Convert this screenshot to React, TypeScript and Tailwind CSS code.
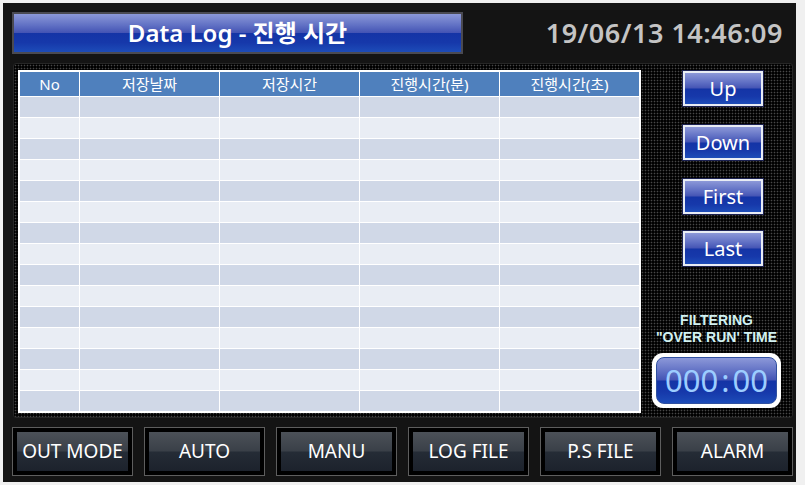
import React from "react";

const columns = [
  { label: "No", w: "w-[59px]" },
  { label: "저장날짜", w: "w-[139px]" },
  { label: "저장시간", w: "w-[139px]" },
  { label: "진행시간(분)", w: "w-[139px]" },
  { label: "진행시간(초)", w: "flex-1" },
];

const rows = Array.from({ length: 15 }, (_, i) => i);

const navButtons = [
  { label: "Up", mt: "mt-0" },
  { label: "Down", mt: "mt-[17px]" },
  { label: "First", mt: "mt-[17px]" },
  { label: "Last", mt: "mt-[15px]" },
];

const bottomButtons = ["OUT MODE", "AUTO", "MANU", "LOG FILE", "P.S FILE", "ALARM"];

const blueGloss =
  "bg-[linear-gradient(180deg,#8c98d8_0%,#6070c4_30%,#4454b4_49%,#1434a6_51%,#1638aa_75%,#1d4cb8_100%)]";

function NavButton({ label, mt }: { label: string; mt: string }) {
  return (
    <div className={`${mt} ml-[41px] w-[82px] h-[37px] border border-[#1a2050] bg-[#e8ecf4] p-[2px]`}>
      <div className={`flex h-full w-full items-center justify-center ${blueGloss} text-[20px] leading-none text-white`}>
        {label}
      </div>
    </div>
  );
}

export default function App() {
  return (
    <div
      className="w-[805px] h-[485px] bg-[#f0f0f0] pt-[3px] pl-[3px] pr-[9px] pb-[3px]"
      style={{ fontFamily: '"Noto Sans", "Noto Sans CJK KR", sans-serif' }}
    >
      <div className="flex h-[479px] w-[793px] flex-col bg-[#141414] pl-[9px] pr-[3px] pt-[9px]">
        {/* title row */}
        <div className="flex h-[42px] items-center">
          <div className={`flex h-[42px] w-[451px] items-center justify-center border-2 border-[#4a4a52] ${blueGloss}`}>
            <span className="text-[24px] font-semibold text-white">Data Log - 진행 시간</span>
          </div>
          <div className="flex-1 pr-[10px] text-right text-[27px] font-semibold tracking-[0.5px] text-[#c4c4c4]">
            19/06/13 14:46:09
          </div>
        </div>

        {/* main panel */}
        <div className="ml-px mt-[9px] flex h-[355px] rounded-[3px] border border-[#262626] bg-black bg-[radial-gradient(circle,#474747_0.7px,transparent_1.1px)] bg-[length:3px_3px] pl-[4px] pt-[6px]">
          <div className="flex h-[343px] w-[623px] flex-col border-2 border-white bg-white">
            <div className="flex h-[24px] gap-px">
              {columns.map((c) => (
                <div
                  key={c.label}
                  className={`${c.w} flex items-center justify-center bg-[#4f80bd] text-[15px] text-white`}
                >
                  {c.label}
                </div>
              ))}
            </div>
            {rows.map((r) => (
              <div key={r} className="mt-px flex h-[20px] gap-px">
                {columns.map((c) => (
                  <div key={c.label} className={`${c.w} ${r % 2 === 0 ? "bg-[#d0d8e7]" : "bg-[#e9edf4]"}`} />
                ))}
              </div>
            ))}
          </div>

          <div className="flex flex-1 flex-col items-start">
            {navButtons.map((b) => (
              <NavButton key={b.label} label={b.label} mt={b.mt} />
            ))}
            <div className="mt-[45px] w-full text-center font-['Liberation_Sans',sans-serif] text-[14px] font-bold text-[#d2f2f2]">
              <div className="leading-[17px]">FILTERING</div>
              <div className="leading-[17px]">"OVER RUN' TIME</div>
            </div>
            <div className="mt-[7px] ml-[11px] h-[55px] w-[129px] rounded-[11px] bg-white p-[4px]">
              <div
                className={`flex h-full w-full items-center justify-center rounded-[8px] border border-[#3050a0] ${blueGloss} text-[31px] leading-none text-[#9ccdff]`}
              >
                000<span className="mx-[3px]">:</span>00
              </div>
            </div>
          </div>
        </div>

        {/* bottom buttons */}
        <div className="mt-[9px] flex gap-[11px]">
          {bottomButtons.map((b) => (
            <div key={b} className="h-[49px] flex-1 border border-[#5e5e5e] bg-black p-[4px]">
              <div className="flex h-full w-full items-center justify-center bg-[linear-gradient(180deg,#4c5158_0%,#3a4048_48%,#252c36_52%,#1c222c_100%)] text-[19px] leading-none text-white">
                {b}
              </div>
            </div>
          ))}
        </div>
      </div>
    </div>
  );
}
